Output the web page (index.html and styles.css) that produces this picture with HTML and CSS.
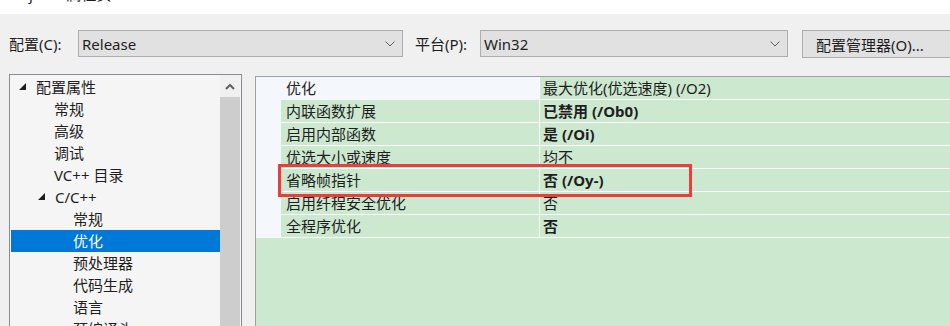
FILE: index.html
```html
<!DOCTYPE html>
<html lang="zh">

<head>
    <meta charset="UTF-8">
    <meta name="viewport" content="width=device-width, initial-scale=1.0">
    <title>属性页</title>
    <link rel="stylesheet" href="styles.css">
</head>

<body>
    <!-- 标题栏（只露出下沿） -->
    <div class="title_bar"><span>Project1 属性页</span></div>

    <!-- 配置 / 平台 -->
    <div class="toolbar">
        <label class="tool_label config_label">配置(C):</label>
        <div class="combo config_combo">
            <span>Release</span>
            <svg class="chevron" width="10" height="6" viewBox="0 0 10 6"><path d="M0.5 0.5 L5 5 L9.5 0.5" fill="none" stroke="#606060" stroke-width="1"/></svg>
        </div>
        <label class="tool_label platform_label">平台(P):</label>
        <div class="combo platform_combo">
            <span>Win32</span>
            <svg class="chevron" width="10" height="6" viewBox="0 0 10 6"><path d="M0.5 0.5 L5 5 L9.5 0.5" fill="none" stroke="#606060" stroke-width="1"/></svg>
        </div>
        <button class="manager_btn">配置管理器(O)...</button>
    </div>

    <div class="main">
        <!-- 左侧树 -->
        <div class="tree">
            <ul class="tree_list">
                <li class="level0"><svg class="expander" width="8" height="8" viewBox="0 0 8 8"><polygon points="7,0 7,7 0,7" fill="#1e1e1e"/></svg>配置属性</li>
                <li class="level1">常规</li>
                <li class="level1">高级</li>
                <li class="level1">调试</li>
                <li class="level1">VC++ 目录</li>
                <li class="level1"><svg class="expander" width="8" height="8" viewBox="0 0 8 8"><polygon points="7,0 7,7 0,7" fill="#1e1e1e"/></svg>C/C++</li>
                <li class="level2">常规</li>
                <li class="level2 selected">优化</li>
                <li class="level2">预处理器</li>
                <li class="level2">代码生成</li>
                <li class="level2">语言</li>
                <li class="level2">预编译头</li>
            </ul>
            <div class="scrollbar">
                <div class="scroll_up">
                    <svg width="10" height="7" viewBox="0 0 10 7"><path d="M1 6 L5 2 L9 6" fill="none" stroke="#606060" stroke-width="2"/></svg>
                </div>
                <div class="thumb"></div>
            </div>
        </div>

        <!-- 右侧属性表 -->
        <div class="grid_panel">
            <div class="prop_row first_row">
                <div class="margin_cell"></div>
                <div class="name_cell">优化</div>
                <div class="value_cell">最大优化(优选速度) (/O2)</div>
            </div>
            <div class="prop_row">
                <div class="margin_cell"></div>
                <div class="name_cell">内联函数扩展</div>
                <div class="value_cell bold">已禁用 (/Ob0)</div>
            </div>
            <div class="prop_row">
                <div class="margin_cell"></div>
                <div class="name_cell">启用内部函数</div>
                <div class="value_cell bold">是 (/Oi)</div>
            </div>
            <div class="prop_row">
                <div class="margin_cell"></div>
                <div class="name_cell">优选大小或速度</div>
                <div class="value_cell">均不</div>
            </div>
            <div class="prop_row">
                <div class="margin_cell"></div>
                <div class="name_cell">省略帧指针</div>
                <div class="value_cell bold">否 (/Oy-)</div>
            </div>
            <div class="prop_row">
                <div class="margin_cell"></div>
                <div class="name_cell">启用纤程安全优化</div>
                <div class="value_cell">否</div>
            </div>
            <div class="prop_row">
                <div class="margin_cell"></div>
                <div class="name_cell">全程序优化</div>
                <div class="value_cell bold">否</div>
            </div>

            <!-- 红框标注 -->
            <div class="highlight"></div>
        </div>
    </div>
</body>

</html>
```

FILE: styles.css
```css
* {
    margin: 0px;
    padding: 0px;
    box-sizing: border-box;
}

ul {
    list-style: none;
}

body {
    width: 950px;
    height: 326px;
    overflow: hidden;
    background-color: #f0f0f0;
    color: #1e1e1e;
    font-family: "Noto Sans", "Noto Sans CJK SC", sans-serif;
    font-size: 15px;
}


/* -------------------------标题栏------------------------- */
.title_bar {
    height: 14px;
    background-color: #fff;
    overflow: hidden;
    padding-left: 5px;
}

.title_bar span {
    display: block;
    line-height: 20px;
    margin-top: -16px;
}


/* -------------------------工具栏------------------------- */
.toolbar {
    display: flex;
    align-items: center;
    height: 28px;
    margin-top: 16px;
    padding-left: 9px;
}

.toolbar > * {
    flex-shrink: 0;
}

.tool_label {
    line-height: 20px;
}

.config_label {
    width: 69px;
}

.platform_label {
    width: 65px;
    margin-left: 12px;
}

.combo {
    height: 27px;
    display: flex;
    align-items: center;
    justify-content: space-between;
    padding: 0px 7px 0px 3px;
    background-color: #e1e1e1;
    border: 1px solid #adadad;
    align-self: flex-start;
}

.config_combo {
    width: 325px;
}

.platform_combo {
    width: 308px;
}

.chevron {
    display: block;
}

.manager_btn {
    width: 160px;
    height: 28px;
    margin-left: 14px;
    padding-left: 13px;
    text-align: left;
    font: inherit;
    color: inherit;
    white-space: nowrap;
    background-color: #e1e1e1;
    border: 1px solid #adadad;
}


/* -------------------------主体------------------------- */
.main {
    display: flex;
    align-items: flex-start;
    margin-top: 16px;
    padding-left: 9px;
}


/* -------------------------左侧树------------------------- */
.tree {
    width: 233px;
    height: 280px;
    flex-shrink: 0;
    display: flex;
    padding: 0px 1px;
    background-color: #f5f5f5;
    border: 1px solid #8a8a94;
}

.tree_list {
    flex: 1;
    padding-top: 1px;
}

.tree_list li {
    display: flex;
    align-items: center;
    height: 22px;
    line-height: 22px;
    white-space: nowrap;
}

.tree_list .level0 {
    padding-left: 24px;
}

.tree_list .level1 {
    padding-left: 43px;
}

.tree_list .level2 {
    padding-left: 62px;
}

.tree_list .expander {
    display: block;
    margin-left: -16px;
    margin-right: 9px;
    margin-top: -1px;
}

.tree_list .selected {
    background-color: #0078d7;
    color: #fff;
}

.scrollbar {
    width: 20px;
    display: flex;
    flex-direction: column;
    background-color: #f0f0f0;
}

.scroll_up {
    height: 22px;
    display: flex;
    align-items: center;
    justify-content: center;
}

.thumb {
    flex: 1;
    background-color: #cdcdcd;
}


/* -------------------------右侧属性表------------------------- */
.grid_panel {
    position: relative;
    flex: 1;
    height: 260px;
    margin-left: 13px;
    margin-top: 2px;
    background-color: #cce8cf;
    border-top: 1px solid #a0a0a0;
    border-left: 1px solid #a0a0a0;
}

.prop_row {
    display: grid;
    grid-template-columns: 25px 259px 1fr;
    height: 23px;
    line-height: 22px;
    white-space: nowrap;
}

.margin_cell {
    background-color: #f4f7fb;
}

.name_cell {
    padding-left: 5px;
    border-right: 1px solid #fff;
    border-bottom: 1px solid #fff;
}

.value_cell {
    padding-left: 3px;
    border-bottom: 1px solid #fff;
}

.first_row .name_cell {
    background-color: #f4f7fb;
    border-bottom-color: #f4f7fb;
}

.bold {
    font-weight: bold;
}

.highlight {
    position: absolute;
    left: 22px;
    top: 87px;
    width: 414px;
    height: 33px;
    border: 3px solid #ef3b3b;
}
```
